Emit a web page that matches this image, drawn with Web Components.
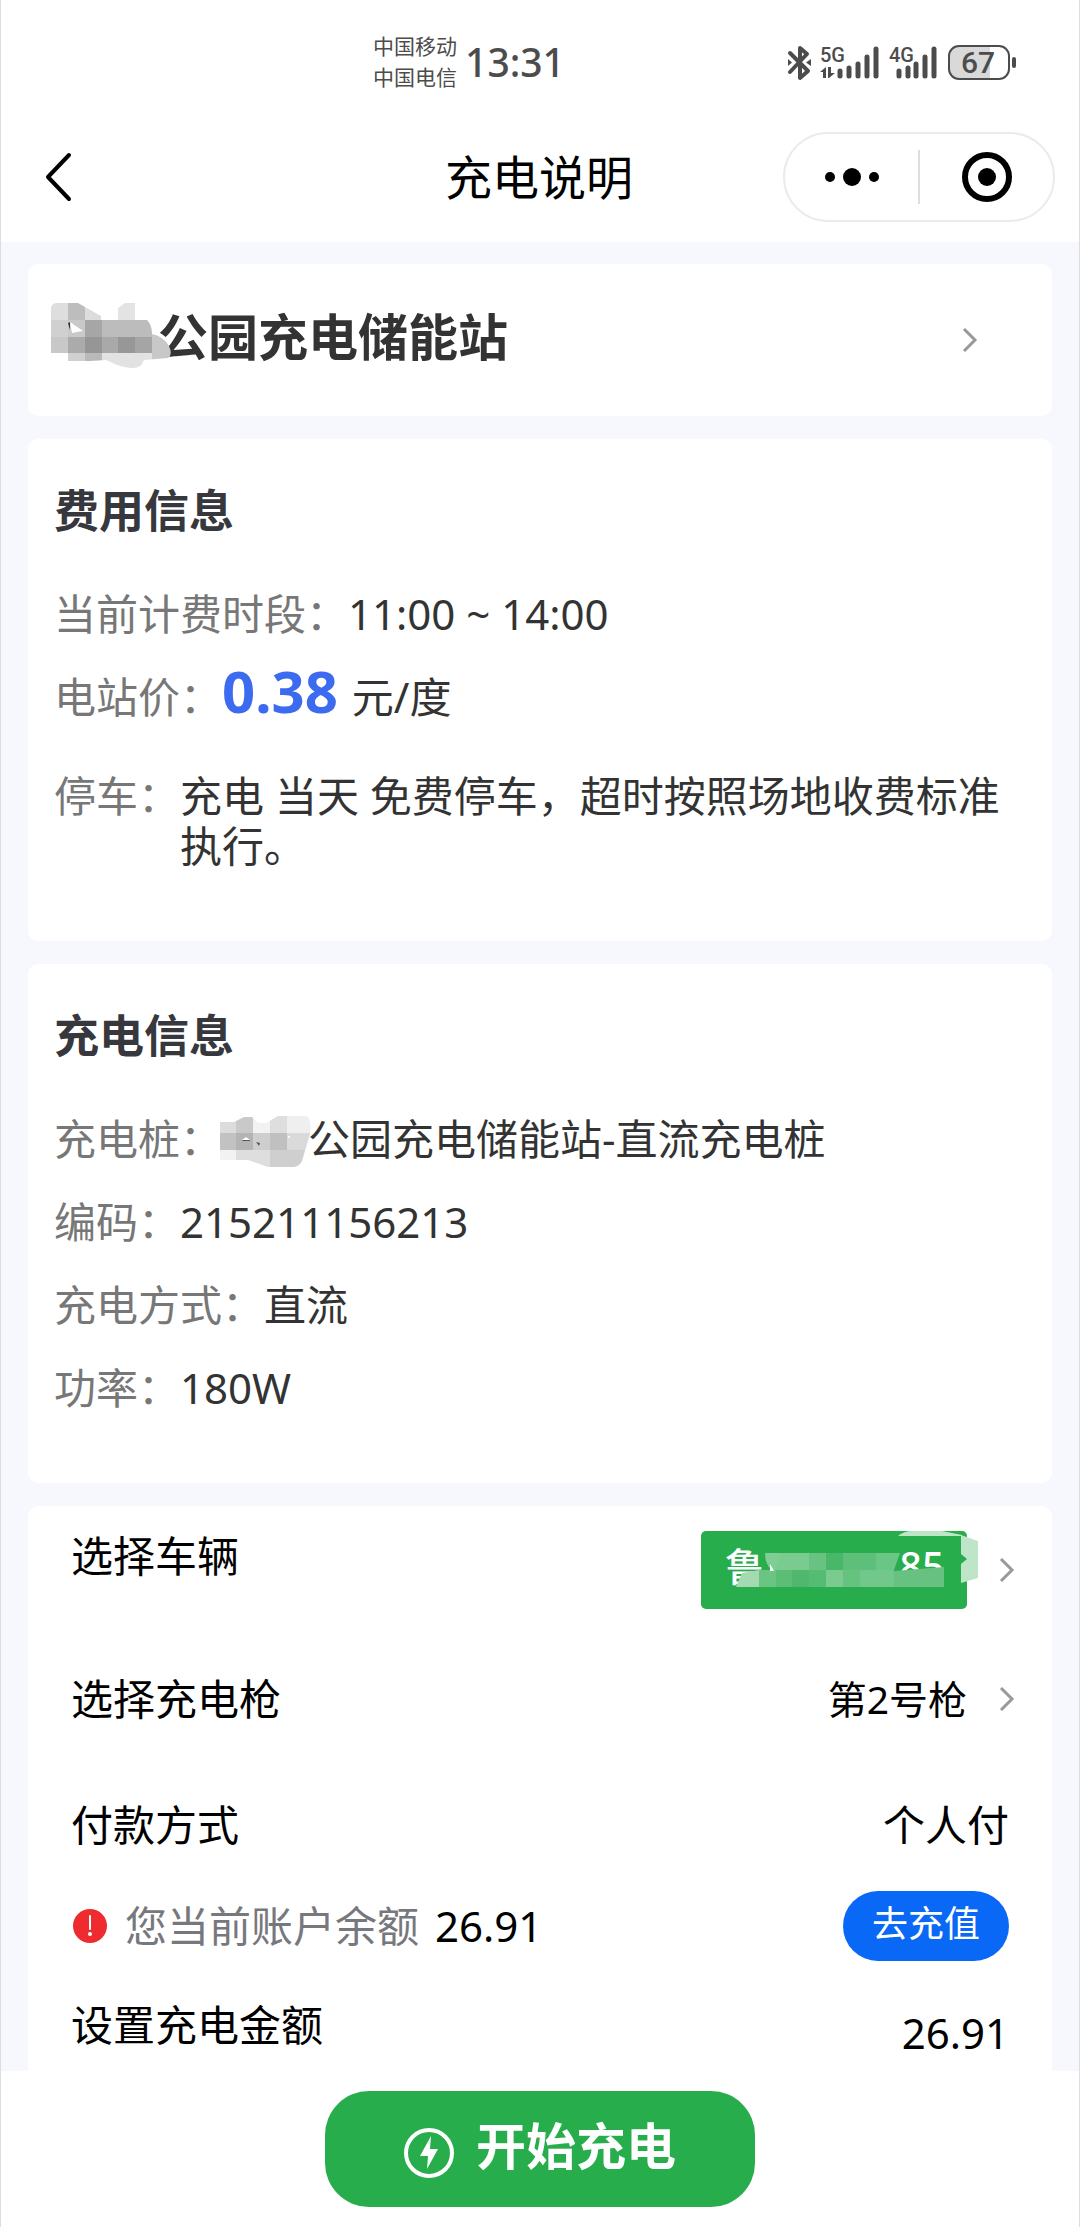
<!DOCTYPE html>
<html lang="zh-CN">
<head>
<meta charset="utf-8">
<meta name="viewport" content="width=device-width, initial-scale=1">
<title>充电说明</title>
<style>
  body {
    margin: 0;
    background: #fff;
    color: #333;
    font-family: "Noto Sans", "Noto Sans CJK SC", sans-serif;
    font-size: 42px;
    line-height: 50px;
  }
</style>
</head>
<body>
<charge-page></charge-page>

<script>
class BaseElement extends HTMLElement {
  constructor() {
    super();

    const shadowRoot = this.attachShadow({ mode: 'open' });
    const template = document.createElement('template');

    template.innerHTML = this.template();
    shadowRoot.appendChild(template.content.cloneNode(true));
  }
}

class StatusBar extends BaseElement {
  template() {
    return `
      <style>
        :host {
          display: grid;
          grid-template-columns: 1fr auto 1fr;
          align-items: center;
          height: 124px;
          padding: 0 62px;
          box-sizing: border-box;
          color: #4c4c4c;
        }
        .clock {
          grid-column: 2;
          display: flex;
          align-items: center;
          gap: 8px;
          margin-right: 142px;
        }
        .carriers {
          font-size: 21px;
          line-height: 31px;
        }
        .time {
          font-size: 39px;
          font-weight: 500;
        }
        svg {
          grid-column: 3;
          justify-self: end;
          display: block;
          overflow: visible;
        }
        text {
          font-family: Roboto, sans-serif;
          font-weight: 500;
          fill: #4c4c4c;
        }
      </style>
      <div class="clock">
        <div class="carriers"><div>中国移动</div><div>中国电信</div></div>
        <div class="time">13:31</div>
      </div>
      <svg width="230" height="36" viewBox="787 45 230 36" aria-hidden="true">
        <path d="M790 54 L808 72 L800 79 L800 49 L807 55 L790 73" fill="none" stroke="#4c4c4c" stroke-width="4" stroke-linejoin="round" stroke-linecap="round"/>
        <path d="M788 60 v7 l4 -3.500 z M811 60 v7 l-5 -3.500 z" fill="#4c4c4c"/>
        <text x="820" y="63" font-size="20">5G</text>
        <path d="M820 73 l6 -5 v11 h-3 v-6 z M828 68 h3 v6 h4 l-6 5 h-1 z" fill="#4c4c4c"/>
        <g stroke="#4c4c4c" stroke-width="5" stroke-linecap="round">
          <path d="M840 72 V77 M849 69 V77 M858 65 V77 M867 58 V77 M876 50 V77"/>
          <path d="M899 72 V77 M908 69 V77 M916 65 V77 M925 58 V77 M934 50 V77"/>
        </g>
        <text x="889" y="63" font-size="20">4G</text>
        <path d="M990 47 H959 Q949 47 949 57 V70 Q949 80 959 80 H990 Z" fill="#d9d9d9"/>
        <rect x="949" y="47" width="60" height="33" rx="10" fill="none" stroke="#4c4c4c" stroke-width="2"/>
        <rect x="1012" y="58" width="4" height="11" rx="2" fill="#4c4c4c"/>
        <text x="961" y="74" font-size="30">67</text>
      </svg>
    `;
  }
}

class NavBar extends BaseElement {
  template() {
    return `
      <style>
        :host {
          display: grid;
          grid-template-columns: 1fr auto 1fr;
          align-items: center;
          height: 118px;
          padding: 0 24px 12px 40px;
          box-sizing: border-box;
          color: #000;
        }
        h1 {
          margin: 0 18px 0 0;
          font-size: 47px;
          font-weight: 400;
          line-height: 60px;
        }
        button {
          padding: 0;
          border: 0;
          background: none;
          display: flex;
          align-items: center;
          justify-content: center;
        }
        .capsule {
          justify-self: end;
          display: flex;
          align-items: center;
          width: 272px;
          height: 90px;
          box-sizing: border-box;
          border: 2px solid #ebebeb;
          border-radius: 45px;
        }
        .capsule button {
          width: 134px;
          height: 100%;
        }
        .capsule i {
          flex: none;
          width: 2px;
          height: 54px;
          background: #dedede;
        }
      </style>
      <button type="button" aria-label="返回" style="justify-self: start">
        <svg width="36" height="52" viewBox="0 0 36 52"><path d="M28 4 L7 26 L28 48" fill="none" stroke="#000" stroke-width="4" stroke-linecap="round" stroke-linejoin="round"/></svg>
      </button>
      <h1><slot></slot></h1>
      <div class="capsule">
        <button type="button" aria-label="更多">
          <svg width="54" height="18" viewBox="0 0 54 18"><circle cx="5" cy="9" r="5"/><circle cx="27" cy="9" r="9"/><circle cx="49" cy="9" r="5"/></svg>
        </button>
        <i></i>
        <button type="button" aria-label="关闭">
          <svg width="50" height="50" viewBox="0 0 50 50"><circle cx="25" cy="25" r="22" fill="none" stroke="#000" stroke-width="6"/><circle cx="25" cy="25" r="9"/></svg>
        </button>
      </div>
    `;
  }
}

// Pixelated cover over the hidden part of a name; "name" picks the drawing.
const COVERS = {
  title: {
    width: 102, x: -5, y: -31, w: 122, h: 70,
    body: `
      <clipPath id="c"><path d="M0 5 Q1 0 6 0 H27 L50 13 V17 H67 V5 L74 0 H84 V17 H96 Q101 22 101 31 Q112 33 118 43 Q122 52 117 55 L93 57 Q90 66 81 65 Q71 65 55 57 L39 58 H17 V50 H0 Z"/></clipPath>
      <g clip-path="url(#c)">
        <path d="M0 0H17V17H0Z" fill="#dedede"/><path d="M17 0H34V17H17Z" fill="#bdbdbd"/><path d="M34 0H51V17H34Z" fill="#dcdcdc"/><path d="M67 0H84V17H67Z" fill="#e3e3e3"/>
        <path d="M0 17H17V34H0Z" fill="#d0d0d0"/><path d="M17 17H34V34H17Z" fill="#c9c9c9"/><path d="M34 17H51V34H34Z" fill="#a6a6a6"/><path d="M51 17H101V34H51Z" fill="#bcbcbc"/>
        <path d="M0 34H17V50H0Z" fill="#c8c8c8"/><path d="M17 34H34V50H17Z" fill="#ababab"/><path d="M34 34H51V50H34Z" fill="#969696"/><path d="M51 34H67V50H51Z" fill="#a9a9a9"/><path d="M67 34H84V50H67Z" fill="#979797"/><path d="M84 34H101V50H84Z" fill="#a5a5a5"/><path d="M101 30H120V57H101Z" fill="#c8c8c8"/>
        <path d="M17 50H34V60H17Z" fill="#d0d0d0"/><path d="M34 50H51V60H34Z" fill="#b9b9b9"/><path d="M51 50H101V68H51Z" fill="#e2e2e2"/>
      </g>
      <path d="M19 19 L32 28 L21 30 Z" fill="#fff"/><path d="M17 20 l2 -1 v8 z" fill="#333"/>`
  },
  pile: {
    width: 86, x: -4, y: -20, w: 96, h: 52,
    body: `
      <clipPath id="c"><path d="M0 6 H16 L26 1 H34 L40 7 H48 L60 0 H88 Q94 2 92 18 L84 45 Q82 50 76 51 H50 L30 44 H2 Z"/></clipPath>
      <g clip-path="url(#c)">
        <path d="M2 0H18V17H2Z" fill="#dcdcdc"/><path d="M18 0H35V17H18Z" fill="#c9c9c9"/><path d="M35 0H52V17H35Z" fill="#f2f2f2"/><path d="M52 0H69V17H52Z" fill="#dedede"/><path d="M69 0H96V17H69Z" fill="#efefef"/>
        <path d="M2 17H18V34H2Z" fill="#c2c2c2"/><path d="M18 17H35V34H18Z" fill="#b4b4b4"/><path d="M35 17H52V34H35Z" fill="#cecece"/><path d="M52 17H69V34H52Z" fill="#c0c0c0"/><path d="M69 17H96V34H69Z" fill="#dadada"/>
        <path d="M2 34H18V44H2Z" fill="#f2f2f2"/><path d="M18 34H52V52H18Z" fill="#dedede"/><path d="M52 34H96V52H52Z" fill="#cfcfcf"/>
      </g>
      <path d="M24 24 l4 -3 4 3 z" fill="#fff"/><path d="M24 24 h8 v1 h-7 z M38 26 l4 1 -1 3 z" fill="#555"/><circle cx="71" cy="21" r="1" fill="#fff"/>`
  },
  plate: {
    width: 95, x: -27, y: -31, w: 235, h: 60,
    body: `
      <g>
        <path d="M161 5 Q167 0 175 0 H205 L225 4 V5 Z" fill="#bfe5c9"/>
        <path d="M224 4 L241 10 V47 L224 52 V33 L230 28 L224 23 Z" fill="#bfe5c9"/>
        <path d="M28 22 H44 V39 H35 Q28 34 28 22 Z" fill="#7fce95"/>
        <path d="M44 22 H72 V39 H38 Z" fill="#7acb90"/><path d="M72 22 H89 V39 H72 Z" fill="#68c382"/><path d="M89 22 H106 V39 H89 Z" fill="#48b868"/><path d="M106 22 H139 V39 H106 Z" fill="#5dbf79"/><path d="M139 22 H163 L157 39 H139 Z" fill="#6ac685"/>
        <path d="M-1 56 L5 42 L22 39 V56 Z" fill="#a3dab1"/><path d="M22 39 H39 V56 H22 Z" fill="#6ac583"/><path d="M39 39 H55 V56 H39 Z" fill="#5cbd77"/><path d="M55 39 H72 V56 H55 Z" fill="#50b86e"/><path d="M72 39 H89 V56 H72 Z" fill="#55bd73"/><path d="M89 39 H106 V56 H89 Z" fill="#7bcb91"/><path d="M106 39 H123 V56 H106 Z" fill="#65c27f"/><path d="M123 39 H157 V56 H123 Z" fill="#72c78a"/><path d="M157 40 L207 36 V56 H157 Z" fill="#67c281"/>
        <path d="M33 33 V40 H37 Z" fill="#fff"/>
      </g>`
  }
};

class CoverPatch extends HTMLElement {
  constructor() {
    super();

    const cover = COVERS[this.getAttribute('name')];

    this.attachShadow({ mode: 'open' }).innerHTML = `
      <style>
        :host {
          display: inline-block;
          position: relative;
          width: ${cover.width}px;
          height: 16px;
          vertical-align: middle;
        }
        svg {
          position: absolute;
          left: ${cover.x}px;
          top: ${cover.y}px;
          overflow: visible;
        }
      </style>
      <svg width="${cover.w}" height="${cover.h}" aria-hidden="true">${cover.body}</svg>
    `;
  }
}

class ArrowIcon extends BaseElement {
  template() {
    return `
      <style>
        :host { display: block; flex: none; }
        svg { display: block; }
      </style>
      <svg width="16" height="26" viewBox="0 0 16 26"><path d="M2 2 L13 13 L2 24" fill="none" stroke="#999" stroke-width="3"/></svg>
    `;
  }
}

class InfoCard extends BaseElement {
  template() {
    return `
      <style>
        :host {
          display: block;
          padding: 42px 26px 70px;
          border-radius: 10px;
          background: #fff;
        }
        h2 {
          margin: 0 0 48px;
          color: #37383d;
          font-size: 45px;
          font-weight: 700;
          line-height: 60px;
        }
        .rows {
          display: flex;
          flex-direction: column;
          gap: 33px;
        }
      </style>
      <h2><slot name="heading"></slot></h2>
      <div class="rows"><slot></slot></div>
    `;
  }
}

class InfoRow extends BaseElement {
  template() {
    return `
      <style>
        :host {
          display: flex;
        }
        :host([spaced]) {
          margin-top: 16px;
        }
        .label {
          flex: none;
          color: #777;
        }
      </style>
      <div class="label"><slot name="label"></slot></div>
      <div><slot></slot></div>
    `;
  }
}

class StationLink extends BaseElement {
  template() {
    return `
      <style>
        :host {
          display: block;
          border-radius: 10px;
          background: #fff;
        }
        a {
          display: flex;
          align-items: center;
          justify-content: space-between;
          height: 152px;
          padding: 0 74px 0 28px;
          color: #333;
          font-size: 50px;
          font-weight: 700;
          line-height: 60px;
          text-decoration: none;
        }
        span {
          margin-bottom: 6px;
        }
      </style>
      <a href="#station"><span><slot></slot></span><arrow-icon></arrow-icon></a>
    `;
  }
}

class OrderForm extends BaseElement {
  template() {
    return `
      <style>
        :host {
          display: block;
          padding: 0 43px;
          border-radius: 10px 10px 0 0;
          background: #fff;
          color: #000;
        }
        .row {
          display: flex;
          align-items: center;
          justify-content: space-between;
          min-height: 126px;
        }
        .top {
          align-items: flex-start;
          min-height: 105px;
          padding-top: 25px;
        }
        .balance {
          min-height: 76px;
        }
        .amount {
          align-items: flex-start;
          min-height: 64px;
          padding-top: 36px;
        }
        button, input {
          padding: 0;
          border: 0;
          background: none;
          color: inherit;
          font: inherit;
        }
        .pick {
          display: flex;
          align-items: center;
          gap: 32px;
          margin-right: -6px;
          font-size: 39px;
        }
        .plate {
          width: 266px;
          height: 78px;
          padding: 0 24px;
          box-sizing: border-box;
          border-radius: 5px;
          background: #28ad4d;
          color: #fff;
          font-weight: 500;
          line-height: 70px;
          text-align: left;
          white-space: nowrap;
        }
        .note {
          display: flex;
          align-items: center;
          gap: 18px;
        }
        .note span {
          color: #77787d;
        }
        .note b {
          margin-left: -2px;
          font-weight: 400;
        }
        .recharge {
          width: 166px;
          height: 70px;
          border-radius: 35px;
          background: #0968f6;
          color: #fff;
          font-size: 36px;
          line-height: 64px;
          padding-bottom: 4px;
        }
        input {
          width: 240px;
          height: 64px;
          text-align: right;
        }
      </style>
      <div class="row top">
        <div>选择车辆</div>
        <button class="pick" type="button" aria-label="选择车辆">
          <span class="plate">鲁<cover-patch name="plate"></cover-patch><span>&nbsp;&nbsp;&nbsp;&nbsp;85</span></span>
          <arrow-icon></arrow-icon>
        </button>
      </div>
      <div class="row">
        <div>选择充电枪</div>
        <button class="pick" type="button" aria-label="选择充电枪"><span>第2号枪</span><arrow-icon></arrow-icon></button>
      </div>
      <div class="row"><div>付款方式</div><div>个人付</div></div>
      <div class="row balance">
        <div class="note">
          <svg width="36" height="34" viewBox="0 0 36 34"><circle cx="19" cy="17" r="17" fill="#ee2b2e"/><path d="M19 7 V20" stroke="#fff" stroke-width="2" stroke-linecap="round"/><circle cx="19" cy="25" r="2" fill="#fff"/></svg>
          <span>您当前账户余额</span>
          <b>26.91</b>
        </div>
        <button class="recharge" type="button">去充值</button>
      </div>
      <div class="row amount">
        <label for="amount">设置充电金额</label>
        <input id="amount" type="text" inputmode="decimal" value="26.91">
      </div>
    `;
  }
}

class StartBar extends BaseElement {
  template() {
    return `
      <style>
        :host {
          display: flex;
          justify-content: center;
          padding: 20px 0;
          background: #fff;
        }
        button {
          display: flex;
          align-items: center;
          justify-content: center;
          gap: 22px;
          width: 430px;
          height: 116px;
          padding: 0;
          border: 0;
          border-radius: 44px;
          background: #28ad4d;
          color: #fff;
          font: inherit;
          font-size: 50px;
          font-weight: 700;
        }
        svg {
          margin-top: 8px;
        }
        span {
          margin-bottom: 6px;
        }
      </style>
      <button type="button">
        <svg width="50" height="50" viewBox="0 0 50 50"><circle cx="25" cy="25" r="23" fill="none" stroke="#fff" stroke-width="4"/><path d="M27 8 L16 28 H24 L23 41 L34 21 H26 Z" fill="#fff"/></svg>
        <span>开始充电</span>
      </button>
    `;
  }
}

class ChargePage extends BaseElement {
  template() {
    return `
      <style>
        :host {
          display: flex;
          flex-direction: column;
          min-height: 100vh;
          box-sizing: border-box;
          border: solid #dcdde2;
          border-width: 0 1px;
        }
        main {
          flex: 1;
          display: flex;
          flex-direction: column;
          gap: 23px;
          padding: 22px 27px 0;
          background: #f7f8fe;
        }
        order-form {
          flex: 1;
        }
        .price {
          margin-right: 14px;
          color: #3c6bf0;
          font-size: 58px;
          font-weight: 700;
          line-height: 0;
        }
      </style>
      <status-bar></status-bar>
      <nav-bar>充电说明</nav-bar>
      <main>
        <station-link><cover-patch name="title"></cover-patch>公园充电储能站</station-link>
        <info-card>
          <span slot="heading">费用信息</span>
          <info-row><span slot="label">当前计费时段：</span>11:00 ~ 14:00</info-row>
          <info-row><span slot="label">电站价：</span><span class="price">0.38</span>元/度</info-row>
          <info-row spaced><span slot="label">停车：</span>充电 当天 免费停车，超时按照场地收费标准执行。</info-row>
        </info-card>
        <info-card>
          <span slot="heading">充电信息</span>
          <info-row><span slot="label">充电桩：</span><cover-patch name="pile"></cover-patch>公园充电储能站-直流充电桩</info-row>
          <info-row><span slot="label">编码：</span>215211156213</info-row>
          <info-row><span slot="label">充电方式：</span>直流</info-row>
          <info-row><span slot="label">功率：</span>180W</info-row>
        </info-card>
        <order-form></order-form>
      </main>
      <start-bar></start-bar>
    `;
  }
}

window.customElements.define('status-bar', StatusBar);
window.customElements.define('nav-bar', NavBar);
window.customElements.define('cover-patch', CoverPatch);
window.customElements.define('arrow-icon', ArrowIcon);
window.customElements.define('info-card', InfoCard);
window.customElements.define('info-row', InfoRow);
window.customElements.define('station-link', StationLink);
window.customElements.define('order-form', OrderForm);
window.customElements.define('start-bar', StartBar);
window.customElements.define('charge-page', ChargePage);
</script>
</body>
</html>
